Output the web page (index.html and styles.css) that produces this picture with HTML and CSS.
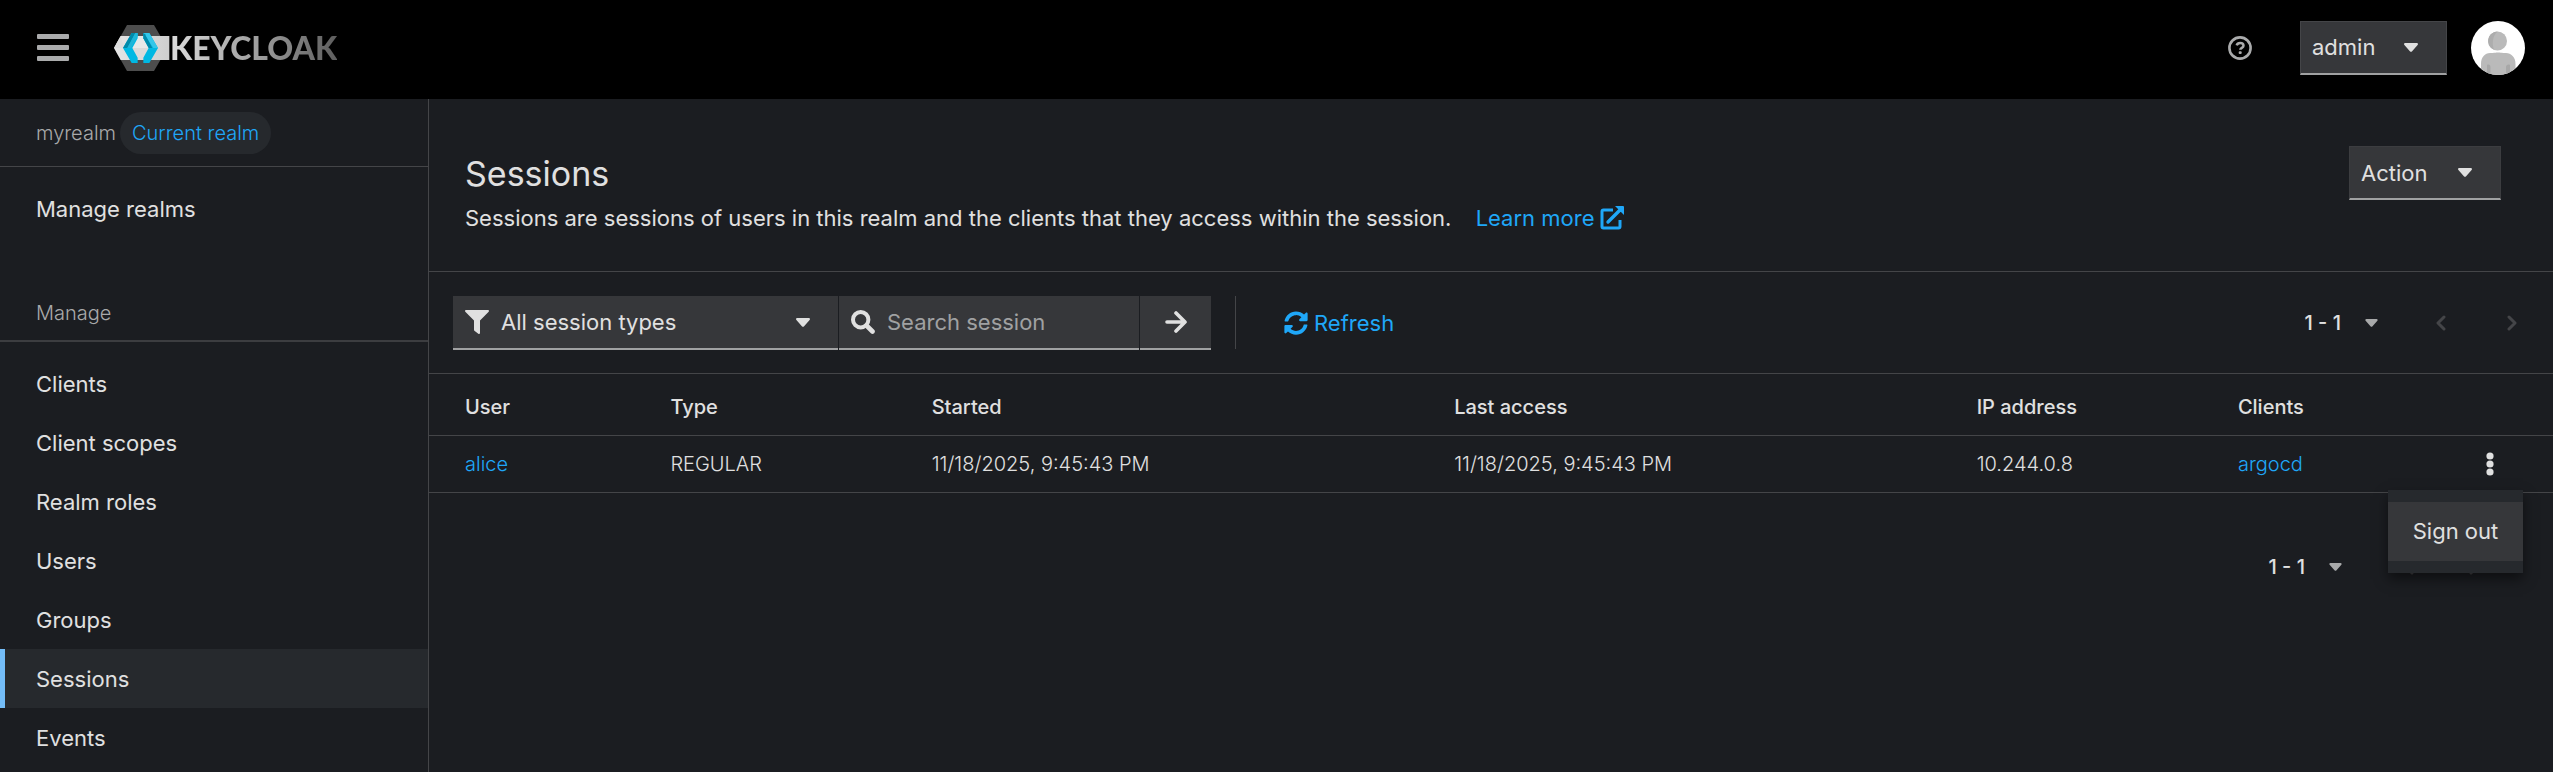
FILE: index.html
```html
<!DOCTYPE html>
<html lang="en">
<head>
<meta charset="utf-8">
<title>Sessions - Keycloak Administration Console</title>
<link rel="stylesheet" href="styles.css">
</head>
<body>
<svg class="sprite" aria-hidden="true">
  <symbol id="caret" viewBox="0 0 14 9"><path d="M1.2 0h11.6c1 0 1.5 1.200.8 1.900L7.900 8.400c-.5.500-1.300.500-1.800 0L.4 1.900C-.3 1.200.2 0 1.200 0z"/></symbol>
  <symbol id="chev-left" viewBox="0 0 10 16"><path d="M8 2 2 8l6 6" fill="none" stroke="currentColor" stroke-width="3" stroke-linecap="round" stroke-linejoin="round"/></symbol>
  <symbol id="chev-right" viewBox="0 0 10 16"><path d="M2 2l6 6-6 6" fill="none" stroke="currentColor" stroke-width="3" stroke-linecap="round" stroke-linejoin="round"/></symbol>
</svg>
<header class="masthead">
  <button class="plain burger" aria-label="Global navigation">
    <svg width="32" height="28" viewBox="0 0 32 28"><rect width="32" height="5" rx="1"/><rect y="11" width="32" height="5" rx="1"/><rect y="22" width="32" height="5" rx="1"/></svg>
  </button>
  <a class="brand" href="#" aria-label="Keycloak">
    <svg width="56" height="46" viewBox="342 78 168 138">
      <defs><linearGradient id="band"><stop offset="0" stop-color="#e6e6e6"/><stop offset="1" stop-color="#cfcfcf"/></linearGradient></defs>
      <path d="M381 78h81l40 69-40 69h-81l-39-69z" fill="#4d4d4d"/>
      <path d="M362 111h146v72H362l-20-36z" fill="url(#band)"/>
      <path d="M342 147h30l-10-36z" fill="#dedede"/>
      <path d="M388 147l24-36h26l18 36-18 36h-26z" fill="#e8e8e8"/>
      <path d="M388 147h68l-18 36h-26z" fill="#dadada"/>
      <path d="M395 102h18v16l-16 29 16 29v16h-18l-26-45z" fill="#00b8e3"/>
      <path d="M395 102h11l-24 45h-13z" fill="#008aaa"/>
      <path d="M406 102h7v9l-20 36h-11z" fill="#1fb5d8"/>
      <path d="M430 102h18l26 45-26 45h-18v-16l16-29-16-29z" fill="#00b8e3"/>
      <path d="M430 102h18l26 45h-14l-25-38z" fill="#33c6e9"/>
      <path d="M430 102l5 4 22 41h-11l-16-29z" fill="#008aaa"/>
    </svg>
    <span class="wordmark">KEYCLOAK</span>
  </a>
  <div class="masthead-tools">
    <button class="plain help" aria-label="Help">
      <svg width="24" height="24" viewBox="0 0 24 24"><circle cx="12" cy="12" r="10.600" fill="none" stroke="currentColor" stroke-width="2.600"/><path d="M8.700 9.400c.5-1.700 1.700-2.400 3.400-2.400 1.900 0 3.400 1 3.400 2.700 0 2.100-3.200 2.200-3.200 4" fill="none" stroke="currentColor" stroke-width="2.500"/><rect x="10.700" y="15.300" width="3" height="2.800" rx="1"/></svg>
    </button>
    <button class="toggle user-toggle" aria-haspopup="menu">admin<svg class="caret" width="14" height="9"><use href="#caret"/></svg></button>
    <svg class="avatar" width="54" height="54" viewBox="0 0 54 54" role="img" aria-label="Avatar">
      <defs><clipPath id="round"><circle cx="27" cy="27" r="27"/></clipPath></defs>
      <g clip-path="url(#round)"><rect width="54" height="54" fill="#fff"/>
      <circle cx="26.500" cy="20" r="9.500" fill="#bababa"/><path d="M26.500 10.500a9.500 9.500 0 0 0-3.500 18.300c-2-6-2-13 3.500-18.300z" fill="#adadad"/>
      <path d="M10 54V43c0-7 4-11 9-11 5 0 5-.5 8-.5s3 .5 8 .5c5 0 9.500 4 9.500 11v11z" fill="#bababa"/><path d="M16 54V44c2-1 3.500 0 3.500 2v8zM39 54V44c-2-1-4 0-4 2v8z" fill="#a8a8a8"/></g>
    </svg>
  </div>
</header>
<div class="page">
  <nav class="sidebar" aria-label="Global">
    <div class="realm"><span>myrealm</span><span class="pill">Current realm</span></div>
    <ul class="nav first"><li><a href="#">Manage realms</a></li></ul>
    <h2 class="nav-title">Manage</h2>
    <ul class="nav">
      <li><a href="#">Clients</a></li>
      <li><a href="#">Client scopes</a></li>
      <li><a href="#">Realm roles</a></li>
      <li><a href="#">Users</a></li>
      <li><a href="#">Groups</a></li>
      <li><a href="#" class="current" aria-current="page">Sessions</a></li>
      <li><a href="#">Events</a></li>
    </ul>
  </nav>
  <main class="main">
    <section class="heading">
      <div>
        <h1>Sessions</h1>
        <p>Sessions are sessions of users in this realm and the clients that they access within the session.
          <a class="learn" href="#">Learn more<svg width="24" height="24" viewBox="0 0 24 24"><path d="M13 4H3.500Q2 4 2 5.500v15Q2 22 3.500 22h15q1.500 0 1.500-1.500V14" fill="none" stroke="currentColor" stroke-width="3"/><path d="M8 16 20 4" stroke="currentColor" stroke-width="3.400" stroke-linecap="round"/><path d="M15 0h8q1 0 1 1v8z"/></svg></a>
        </p>
      </div>
      <button class="toggle action-toggle" aria-haspopup="menu">Action<svg class="caret" width="14" height="9"><use href="#caret"/></svg></button>
    </section>
    <div class="toolbar">
      <div class="field filter">
        <svg width="24" height="24" viewBox="0 0 24 24"><path d="M1 0h22c1 0 1.300 1 .7 1.700L15 10.500V23c0 1-1 1.200-1.700.700l-3.600-2.700c-.5-.3-.7-.7-.7-1.300v-9.200L.3 1.700C-.3 1 0 0 1 0z"/></svg>
        <select aria-label="Session type"><option>All session types</option></select>
        <svg class="caret" width="14" height="9"><use href="#caret"/></svg>
      </div>
      <div class="field search">
        <svg width="24" height="24" viewBox="0 0 24 24"><circle cx="9.700" cy="9.700" r="7.700" fill="none" stroke="currentColor" stroke-width="4"/><path d="M15.500 15.500l6 6" stroke="currentColor" stroke-width="4.600" stroke-linecap="round"/></svg>
        <input type="search" placeholder="Search session" aria-label="Search session">
      </div>
      <button class="field go" aria-label="Search"><svg width="22" height="24" viewBox="0 0 22 24"><path d="M2 12H19M11 3l9 9-9 9" fill="none" stroke="currentColor" stroke-width="3.600" stroke-linecap="round" stroke-linejoin="round"/></svg></button>
      <span class="rule"></span>
      <button class="plain refresh"><svg width="24" height="24" viewBox="0 0 512 512"><path d="M370.720 133.280C339.458 104.008 298.888 87.962 255.848 88c-77.458.068-144.328 53.178-162.791 126.850-1.344 5.363-6.122 9.150-11.651 9.150H24.103c-7.498 0-13.194-6.807-11.807-14.176C33.933 94.924 134.813 8 256 8c66.448 0 126.791 26.136 171.315 68.685L463.030 40.970C478.149 25.851 504 36.559 504 57.941V192c0 13.255-10.745 24-24 24H345.941c-21.382 0-32.090-25.851-16.971-40.971l41.750-41.749zM32 296h134.059c21.382 0 32.090 25.851 16.971 40.971l-41.750 41.750c31.262 29.273 71.835 45.319 114.876 45.280 77.418-.07 144.315-53.144 162.787-126.849 1.344-5.363 6.122-9.150 11.651-9.150h57.304c7.498 0 13.194 6.807 11.807 14.176C478.067 417.076 377.187 504 256 504c-66.448 0-126.791-26.136-171.315-68.685L48.970 471.030C33.851 486.149 8 475.441 8 454.059V320c0-13.255 10.745-24 24-24z"/></svg>Refresh</button>
      <div class="pager">
        <button class="plain count">1 - 1<svg width="13" height="8"><use href="#caret"/></svg></button>
        <button class="plain step" aria-label="Previous page" disabled><svg width="10" height="16"><use href="#chev-left"/></svg></button>
        <button class="plain step" aria-label="Next page" disabled><svg width="10" height="16"><use href="#chev-right"/></svg></button>
      </div>
    </div>
    <table class="sessions">
      <colgroup><col class="c-user"><col class="c-type"><col class="c-time"><col class="c-time"><col class="c-type"><col></colgroup>
      <thead><tr><th>User</th><th>Type</th><th>Started</th><th>Last access</th><th>IP address</th><th>Clients</th></tr></thead>
      <tbody><tr>
        <td><a href="#">alice</a></td><td>REGULAR</td><td>11/18/2025, 9:45:43 PM</td><td>11/18/2025, 9:45:43 PM</td><td>10.244.0.8</td>
        <td><div class="last"><a href="#">argocd</a>
          <div class="kebab-wrap"><button class="plain kebab" aria-label="Kebab toggle" aria-expanded="true"><svg width="8" height="24" viewBox="0 0 8 24"><circle cx="4" cy="4" r="3.600"/><circle cx="4" cy="12" r="3.600"/><circle cx="4" cy="20" r="3.600"/></svg></button>
          <div class="menu" role="menu"><button class="menu-item" role="menuitem">Sign out</button></div></div>
        </div></td>
      </tr></tbody>
    </table>
    <div class="pager bottom">
      <button class="plain count">1 - 1<svg width="13" height="8"><use href="#caret"/></svg></button>
      <button class="plain step" aria-label="Previous page" disabled><svg width="10" height="16"><use href="#chev-left"/></svg></button>
      <button class="plain step" aria-label="Next page" disabled><svg width="10" height="16"><use href="#chev-right"/></svg></button>
    </div>
  </main>
</div>
</body>
</html>
```
FILE: styles.css
```css
* { box-sizing: border-box; }
body {
  margin: 0;
  min-height: 100vh;
  display: flex;
  flex-direction: column;
  background: #1b1d21;
  color: #e0e0e0;
  font: 400 22px/34px Inter, "Liberation Sans", sans-serif;
}
h1, h2, p, ul { margin: 0; padding: 0; }
ul { list-style: none; }
a { color: #1fa7f8; text-decoration: none; }
svg { display: block; flex: none; fill: currentColor; }
button, input, select { font: inherit; color: inherit; border: 0; border-radius: 0; background: none; padding: 0; margin: 0; }
.sprite { position: absolute; width: 0; height: 0; }
.plain { display: flex; align-items: center; }

.masthead { display: flex; align-items: center; height: 99px; padding: 0 28px 4px 37px; background: #000; }
.burger { color: #aaabac; margin-right: 45px; }
.brand { display: flex; align-items: center; }
.wordmark {
  font: 900 32px/46px Lato, sans-serif;
  color: transparent;
  background: linear-gradient(90deg, #dcdcdc, #9a9a9a 55%, #5e5e5e);
  background-clip: text;
}
.masthead-tools { display: flex; align-items: center; margin-left: auto; }
.help { color: #aaabac; margin-right: 48px; }
.avatar { margin-left: 24px; }
.toggle {
  display: flex;
  align-items: center;
  justify-content: space-between;
  height: 54px;
  padding: 0 28px 0 11px;
  background: #36373a;
  border: 1px solid #444548;
  border-bottom: 2px solid #a0a1a2;
}
.user-toggle { width: 147px; }
.action-toggle { width: 152px; border-color: #3c3d40; border-bottom-color: #a0a1a2; }

.page { display: flex; flex: 1; }
.sidebar { width: 429px; flex: none; border-right: 1px solid #444548; }
.realm { display: flex; align-items: center; gap: 4px; height: 68px; padding-left: 36px; border-bottom: 1px solid #444548; color: #a8a9aa; font-size: 20px; font-weight: 300; }
.pill { padding: 4px 12px; border-radius: 21px; background: #26292d; color: #1fa7f8; }
.nav a { display: flex; align-items: center; height: 59px; padding-left: 36px; color: inherit; }
.nav a.current { background: #26292d; border-left: 5px solid #73bcf7; padding-left: 31px; }
.nav.first { padding: 12px 0 58px; }
.nav-title { padding: 0 36px 10px; border-bottom: 2px solid #3c3d40; margin-bottom: 12px; font-size: 20px; font-weight: 300; color: #a8a9aa; }

.main { flex: 1; min-width: 0; }
.heading { display: flex; justify-content: space-between; align-items: flex-start; padding: 47px 52px 36px 36px; border-bottom: 1px solid #444548; }
.heading h1 { font-size: 34px; line-height: 55px; font-weight: 400; }
.learn { display: inline-flex; align-items: center; gap: 6px; margin-left: 18px; }
.toolbar { display: flex; height: 102px; padding: 24px 25px 24px 24px; border-bottom: 1px solid #444548; }
.field { display: flex; align-items: center; height: 54px; padding: 0 12px; background: #36373a; border-bottom: 2px solid #a0a1a2; }
.field + .field { margin-left: 1px; }
.filter { width: 385px; padding-right: 28px; }
.filter select { flex: 1; appearance: none; margin-left: 12px; }
.search { width: 300px; }
.search input { flex: 1; min-width: 0; margin-left: 12px; outline: 0; }
.search input::placeholder { color: #a0a1a2; opacity: 1; }
.go { width: 71px; justify-content: center; }
.rule { width: 1px; margin: 0 48px 0 24px; background: #444548; }
.refresh { color: #1fa7f8; gap: 6px; }
.pager { display: flex; align-items: center; margin-left: auto; }
.count { font-size: 20px; font-weight: 500; gap: 24px; margin-right: 47px; }
.count svg { color: #a8a9aa; }
.step { width: 32px; justify-content: center; color: #444548; }
.step + .step { margin-left: 39px; }

.sessions { width: 100%; table-layout: fixed; border-collapse: collapse; font-size: 20px; font-weight: 300; }
.c-user { width: 10.8%; }
.c-type { width: 12.3%; }
.c-time { width: 24.6%; }
.sessions th { height: 61px; padding: 6px 12px 0; text-align: left; font-weight: 500; border-bottom: 1px solid #444548; }
.sessions td { height: 57px; padding: 0 12px; border-bottom: 1px solid #444548; }
.sessions th:first-child, .sessions td:first-child { padding-left: 36px; }
.last { display: flex; justify-content: space-between; align-items: center; }
.kebab-wrap { position: relative; display: flex; }
.kebab { width: 54px; height: 54px; justify-content: center; margin-right: 24px; }
.menu { position: absolute; top: 53px; right: 18px; width: 135px; padding: 12px 0; background: #26292d; box-shadow: 0 6px 12px rgba(0, 0, 0, .5); z-index: 1; }
.menu-item { width: 100%; height: 59px; background: #36373a; font-size: 22px; font-weight: 400; white-space: nowrap; }
.bottom { justify-content: flex-end; padding: 57px 63px 0 0; }
.bottom .count { margin-right: 51px; }
.bottom .step + .step { margin-left: 33px; }
```
